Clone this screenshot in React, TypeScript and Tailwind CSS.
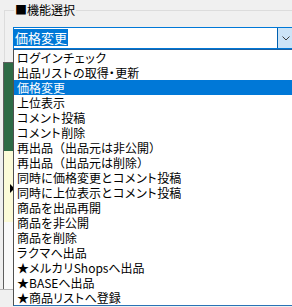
import { Fragment } from "react";

const ITEMS = [
  "ログインチェック",
  "出品リストの取得・更新",
  "価格変更",
  "上位表示",
  "コメント投稿",
  "コメント削除",
  "再出品（出品元は非公開）",
  "再出品（出品元は削除）",
  "同時に価格変更とコメント投稿",
  "同時に上位表示とコメント投稿",
  "商品を出品再開",
  "商品を非公開",
  "商品を削除",
  "ラクマへ出品",
  "★メルカリShopsへ出品",
  "★BASEへ出品",
  "★商品リストへ登録"
];

const SELECTED = "価格変更";

// katakana runs get proportional widths (like Meiryo UI), everything else stays full width
function Label({ text }: { text: string }) {
  const parts = text.split(/([\u30A1-\u30FC]+)/);
  return (
    <>
      {parts.map((p, i) =>
        i % 2 === 1 ? (
          <span key={i} className="tracking-[0.6px] [font-feature-settings:'palt']">
            {p}
          </span>
        ) : (
          <Fragment key={i}>{p}</Fragment>
        )
      )}
    </>
  );
}

export default function App() {
  return (
    <div className="relative h-[307px] w-[292px] overflow-hidden bg-[#f0f0f0] font-['Noto_Sans_CJK_JP',sans-serif] text-black">
      {/* group box */}
      <div className="relative ml-[4px] mt-[10px] h-[52px] border-l border-t border-[#dcdcdc]">
        <span className="absolute left-[9px] top-[-10px] bg-[#f0f0f0] px-[1px] text-[12px] leading-[18px]">
          ■機能選択
        </span>
        <div className="ml-[8px] mt-[16px] flex h-[22px] w-[300px] border border-[#0078d7] bg-white">
          <div className="flex w-[263px] items-start pt-[1px]">
            <span className="block h-[17px] bg-[#0078d7] px-[1px] text-[13px] leading-[17px] text-white">
              {SELECTED}
            </span>
          </div>
          <div className="flex w-[20px] items-center justify-center border-l border-[#0060b0] bg-[#cce4f7] pr-[3px]">
            <svg width="8" height="5" viewBox="0 0 8 5" fill="none">
              <path d="M0.5 0.5 L4 4 L7.5 0.5" stroke="#404040" strokeWidth="1" />
            </svg>
          </div>
        </div>
      </div>

      {/* grid row headers behind the list */}
      <div className="ml-[3px] flex h-[227px] w-[20px] flex-col border-l border-t border-[#5f5f5f]">
        <div className="h-[88px] bg-[#2e6b46]" />
        <div className="relative h-[71px] bg-[#fcfbd8]">
          <svg className="absolute left-[6px] top-[33px]" width="5" height="9" viewBox="0 0 5 9">
            <path d="M0 0 L4.5 4.5 L0 9 Z" fill="#000" />
          </svg>
        </div>
        <div className="flex-1 bg-[#fafafa]" />
      </div>
      <div className="h-px w-[13px] bg-[#b4b4b4]" />

      {/* open dropdown list */}
      <div className="absolute left-[13px] top-[49px] w-[300px] border-b border-l border-t border-b-[#2a72b5] border-l-[#505050] border-t-[#1e5f9e] bg-white">
        {ITEMS.map((item) => (
          <div
            key={item}
            className={`h-[15px] whitespace-nowrap pl-[3px] text-[12px] leading-[15px] ${
              item === SELECTED ? "bg-[#0078d7] text-white" : ""
            }`}
          >
            <Label text={item} />
          </div>
        ))}
      </div>
    </div>
  );
}
